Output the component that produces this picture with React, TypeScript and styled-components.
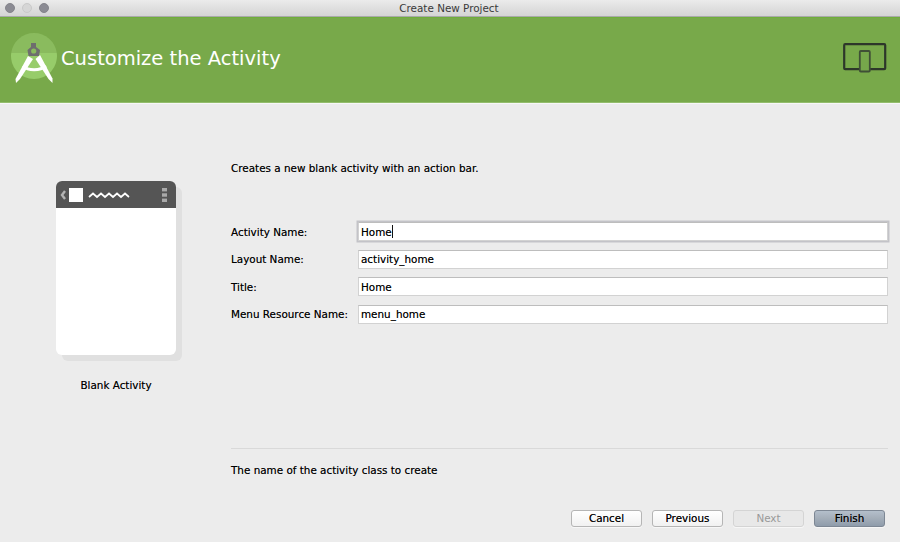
import React from "react";
import styled, { createGlobalStyle } from "styled-components";

const GlobalStyle = createGlobalStyle`
  html, body {
    margin: 0;
    padding: 0;
    background: #ececec;
    font-family: "DejaVu Sans", "Liberation Sans", sans-serif;
  }
`;

const fields = [
  { label: "Activity Name:", value: "Home", focused: true },
  { label: "Layout Name:", value: "activity_home" },
  { label: "Title:", value: "Home" },
  { label: "Menu Resource Name:", value: "menu_home" },
];

const Logo = () => (
  <svg width="50" height="60" viewBox="0 0 50 60">
    <path d="M1.2 23a23 23 0 0 1 45.6 0z" fill="#8abb5e" />
    <path d="M1.2 23a23 23 0 1 0 45.6 0z" fill="#97cc6a" />
    <path d="M13 36c5 5 17 5 23 0" fill="none" stroke="#fff" strokeWidth="3" />
    <path d="M18 26 L5.5 49 L6 53 L10 49 L23 29z" fill="#fff" />
    <path d="M30 25 L42.5 48.5 L42.5 53 L38.5 49 L25.5 29z" fill="#fff" />
    <path d="M21 13 H26 V17 L30 20 L29 26 H18.5 L17.5 20 L21 17z" fill="#6e6e6e" />
    <circle cx="23.7" cy="21" r="2.6" fill="#8abb5e" />
  </svg>
);

const DevicesIcon = () => (
  <svg width="44" height="30" viewBox="0 0 44 30">
    <rect x="1.2" y="1.2" width="41" height="25" rx="1" fill="none" stroke="#2d372a" strokeWidth="2.2" />
    <rect x="16.8" y="8" width="10" height="20.5" rx="1" fill="#76a74b" stroke="#3f4f36" strokeWidth="1.8" />
  </svg>
);

const ActionBarIcons = () => (
  <BarRow>
    <svg width="6" height="10" viewBox="0 0 6 10">
      <path d="M5 1 L2 5 L5 9" fill="none" stroke="#b4b4b4" strokeWidth="2.4" />
    </svg>
    <BarSquare />
    <svg width="42" height="8" viewBox="0 0 42 8">
      <path
        d="M1 6 L5 2.5 L9 6 L13 2.5 L17 6 L21 2.5 L25 6 L29 2.5 L33 6 L37 2.5 L41 6"
        fill="none"
        stroke="#fff"
        strokeWidth="1.7"
      />
    </svg>
    <BarDots>
      <svg width="5" height="14" viewBox="0 0 5 14">
        <rect width="5" height="3.4" fill="#aaa" />
        <rect y="5.3" width="5" height="3.4" fill="#aaa" />
        <rect y="10.6" width="5" height="3.4" fill="#aaa" />
      </svg>
    </BarDots>
  </BarRow>
);

export default function App() {
  return (
    <Window>
      <GlobalStyle />
      <TitleBar>
        <Lights>
          <Light />
          <Light off />
          <Light />
        </Lights>
        <WindowTitle>Create New Project</WindowTitle>
      </TitleBar>
      <Banner>
        <LogoSlot>
          <Logo />
        </LogoSlot>
        <BannerTitle>Customize the Activity</BannerTitle>
        <DevicesSlot>
          <DevicesIcon />
        </DevicesSlot>
      </Banner>
      <Body>
        <PreviewColumn>
          <PreviewCard>
            <ActionBar>
              <ActionBarIcons />
            </ActionBar>
          </PreviewCard>
          <PreviewCaption>Blank Activity</PreviewCaption>
        </PreviewColumn>
        <Content>
          <Description>Creates a new blank activity with an action bar.</Description>
          <Form>
            {fields.map((f) => (
              <Row key={f.label}>
                <Label>{f.label}</Label>
                <Input focused={f.focused}>
                  {f.value}
                  {f.focused && <Caret />}
                </Input>
              </Row>
            ))}
          </Form>
          <Divider />
          <HelpText>The name of the activity class to create</HelpText>
          <Buttons>
            <Button>Cancel</Button>
            <Button>Previous</Button>
            <Button disabled>Next</Button>
            <Button primary>Finish</Button>
          </Buttons>
        </Content>
      </Body>
    </Window>
  );
}

const Window = styled.div`
  width: 900px;
  height: 542px;
  overflow: hidden;
  display: flex;
  flex-direction: column;
  background: #ececec;
`;

const TitleBar = styled.div`
  position: relative;
  height: 17px;
  box-sizing: border-box;
  flex-shrink: 0;
  display: flex;
  align-items: center;
  justify-content: center;
  background: linear-gradient(#ebebeb, #d4d4d4);
  border-bottom: 1px solid #a9a9a9;
`;

const Lights = styled.div`
  position: absolute;
  left: 5px;
  top: 3px;
  display: flex;
  gap: 7px;
`;

const Light = styled.div<{ off?: boolean }>`
  width: 10px;
  height: 10px;
  box-sizing: border-box;
  border-radius: 50%;
  background: ${(props) => (props.off ? "#d6d6d6" : "#8b8b93")};
  border: ${(props) => (props.off ? "1px solid #c9c9c9" : "1px solid #85858c")};
`;

const WindowTitle = styled.div`
  font-size: 10.4px;
  color: #3a3a3a;
  margin-left: -2px;
`;

const Banner = styled.div`
  height: 86px;
  box-sizing: border-box;
  flex-shrink: 0;
  display: flex;
  align-items: center;
  background: #78a94a;
  border-top: 1px solid #6fae3a;
  border-bottom: 1px solid #93bd6c;
`;

const LogoSlot = styled.div`
  width: 61px;
  box-sizing: border-box;
  padding-left: 10px;
  display: flex;
`;

const BannerTitle = styled.div`
  flex: 1;
  font-size: 19.5px;
  color: #fff;
  padding-bottom: 4px;
`;

const DevicesSlot = styled.div`
  padding-right: 13px;
  display: flex;
  margin-bottom: 5px;
`;

const Body = styled.div`
  flex: 1;
  display: flex;
  border-top: 1px solid #f7f7f7;
`;

const PreviewColumn = styled.div`
  width: 231px;
  flex-shrink: 0;
  box-sizing: border-box;
  padding: 77px 55px 0 56px;
`;

const PreviewCard = styled.div`
  width: 120px;
  height: 174px;
  background: #fff;
  border-radius: 6px;
  box-shadow: 6px 6px 0 #e0e0e0;
  overflow: hidden;
`;

const ActionBar = styled.div`
  height: 27px;
  background: #555555;
`;

const BarRow = styled.div`
  height: 100%;
  display: flex;
  align-items: center;
  padding: 0 9px 0 4px;
  gap: 3px;
  > svg:nth-child(3) {
    margin-left: 2px;
  }
`;

const BarSquare = styled.div`
  width: 14px;
  height: 14px;
  background: #fff;
`;

const BarDots = styled.div`
  margin-left: auto;
  display: flex;
`;

const PreviewCaption = styled.div`
  margin-top: 23px;
  font-size: 10.4px;
  line-height: 14px;
  text-align: center;
  color: #000;
  text-shadow: 0 0 0.5px rgba(0, 0, 0, 0.5);
`;

const Content = styled.div`
  flex: 1;
  display: flex;
  flex-direction: column;
  padding: 57px 12px 0 0;
`;

const Description = styled.div`
  font-size: 10.4px;
  line-height: 14px;
  color: #000;
  text-shadow: 0 0 0.5px rgba(0, 0, 0, 0.5);
`;

const Form = styled.div`
  margin-top: 47px;
  display: flex;
  flex-direction: column;
  gap: 8.5px;
`;

const Row = styled.div`
  display: flex;
  align-items: center;
`;

const Label = styled.div`
  width: 127px;
  flex-shrink: 0;
  font-size: 10.4px;
  color: #000;
  text-shadow: 0 0 0.5px rgba(0, 0, 0, 0.5);
`;

const Input = styled.div<{ focused?: boolean }>`
  flex: 1;
  box-sizing: border-box;
  height: 19px;
  padding: 0 2px;
  display: flex;
  align-items: center;
  background: #fff;
  font-size: 10.4px;
  color: #000;
  text-shadow: 0 0 0.5px rgba(0, 0, 0, 0.5);
  border: 1px solid #d2d2d2;
  border-top-color: #bdbdbd;
  box-shadow: ${(props) => (props.focused ? "0 0 0 1.5px #c3c3c8" : "none")};
`;

const Caret = styled.span`
  width: 1px;
  height: 13px;
  background: #111;
`;

const Divider = styled.div`
  margin-top: 124px;
  height: 1px;
  background: #d9d9d9;
`;

const HelpText = styled.div`
  margin-top: 14px;
  font-size: 10.4px;
  line-height: 14px;
  color: #000;
  text-shadow: 0 0 0.5px rgba(0, 0, 0, 0.5);
`;

const Buttons = styled.div`
  margin-top: 33px;
  padding-right: 3px;
  display: flex;
  justify-content: flex-end;
  gap: 10px;
`;

const Button = styled.div<{ primary?: boolean; disabled?: boolean }>`
  width: 71px;
  height: 17px;
  box-sizing: border-box;
  display: flex;
  align-items: center;
  justify-content: center;
  border-radius: 3px;
  font-size: 10.4px;
  color: ${(props) => (props.disabled ? "#999" : "#000")};
  text-shadow: ${(props) => (props.disabled ? "none" : "0 0 0.5px rgba(0, 0, 0, 0.6)")};
  background: ${(props) =>
    props.primary
      ? "linear-gradient(#b4bfcb, #a5afba 45%, #8f9cab)"
      : props.disabled
      ? "#e8e8e8"
      : "linear-gradient(#ffffff, #f1f1f1)"};
  border: 1px solid
    ${(props) => (props.primary ? "#7d8794" : props.disabled ? "#d4d4d4" : "#b5b5b5")};
  box-shadow: 0 1px 0 rgba(255, 255, 255, 0.6);
`;
